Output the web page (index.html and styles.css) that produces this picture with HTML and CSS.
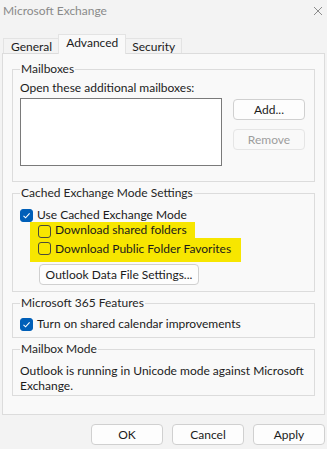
FILE: index.html
```html
<!DOCTYPE html>
<html lang="en">
<head>
  <meta charset="UTF-8" />
  <title>Microsoft Exchange</title>
  <link rel="stylesheet" href="styles.css">
</head>
<body>
  <div class="window">
    <div class="titlebar">
      <span class="title">Microsoft Exchange</span>
      <svg class="close" width="10" height="10" viewBox="0 0 10 10">
        <path d="M1 1 L9 9 M9 1 L1 9" stroke="#8c8c8c" stroke-width="1" fill="none"/>
      </svg>
    </div>

    <div class="tabs">
      <div class="tab">General</div>
      <div class="tab active">Advanced</div>
      <div class="tab">Security</div>
    </div>

    <div class="panel">
      <fieldset class="group mailboxes">
        <legend>Mailboxes</legend>
        <div class="label">Open these additional mailboxes:</div>
        <div class="mailbox-row">
          <div class="listbox"></div>
          <div class="side-buttons">
            <button class="btn">Add...</button>
            <button class="btn" disabled>Remove</button>
          </div>
        </div>
      </fieldset>

      <fieldset class="group cached">
        <legend>Cached Exchange Mode Settings</legend>
        <label class="option use-cached">
          <span class="check checked">
            <svg width="9" height="9" viewBox="0 0 9 9"><path d="M1.5 4.8 L3.6 6.8 L7.6 2.4" stroke="#fff" stroke-width="1.1" fill="none"/></svg>
          </span>
          Use Cached Exchange Mode
        </label>
        <div class="highlight">
          <label class="option marked first"><span class="check"></span>Download shared folders</label>
          <label class="option marked second"><span class="check"></span>Download Public Folder Favorites</label>
        </div>
        <button class="btn wide">Outlook Data File Settings...</button>
      </fieldset>

      <fieldset class="group features">
        <legend>Microsoft 365 Features</legend>
        <label class="option">
          <span class="check checked">
            <svg width="9" height="9" viewBox="0 0 9 9"><path d="M1.5 4.8 L3.6 6.8 L7.6 2.4" stroke="#fff" stroke-width="1.1" fill="none"/></svg>
          </span>
          Turn on shared calendar improvements
        </label>
      </fieldset>

      <fieldset class="group mode">
        <legend>Mailbox Mode</legend>
        <p class="info">Outlook is running in Unicode mode against Microsoft Exchange.</p>
      </fieldset>
    </div>

    <div class="footer">
      <button class="btn">OK</button>
      <button class="btn">Cancel</button>
      <button class="btn">Apply</button>
    </div>
  </div>
</body>
</html>
```

FILE: styles.css
```css
* {
  box-sizing: border-box;
}

body {
  margin: 0;
  background-color: #f3f3f3;
  font-family: 'Lato', sans-serif;
  font-size: 12px;
  color: #1b1b1b;
}

.window {
  width: 327px;
  height: 449px;
  overflow: hidden;
}

.titlebar {
  height: 34px;
  display: flex;
  justify-content: space-between;
  align-items: flex-start;
  padding: 3px 4px 0 3px;
  line-height: 16px;
}

.title {
  color: #8a8a8a;
}

.close {
  margin-top: 3px;
}

.tabs {
  display: flex;
  align-items: flex-end;
  height: 19px;
  padding-left: 3px;
  position: relative;
  z-index: 1;
}

.tab {
  height: 15px;
  padding: 0 6px;
  line-height: 15px;
  border: 1px solid #e3e3e3;
  border-bottom: none;
  background-color: #f3f3f3;
}

.tab:first-child {
  padding-left: 7px;
  border-right: none;
}

.tab:last-child {
  border-left: none;
}

.tab.active {
  height: 20px;
  margin-bottom: -1px;
  padding: 1px 7px 0;
  background-color: #f9f9f9;
  line-height: 14px;
}

.panel {
  margin: 0 2px;
  height: 362px;
  background-color: #f9f9f9;
  border: 1px solid #dcdcdc;
  padding: 8px 9px 0;
}

.group {
  margin: 0;
  border: 1px solid #dcdcdc;
  padding: 0 9px 0 7px;
  min-width: 0;
}

.group + .group {
  margin-top: 4px;
}

.group legend {
  padding: 0 1px;
  line-height: 14px;
  color: #262626;
}

.label {
  margin-top: 4px;
  line-height: 16px;
}

.mailbox-row {
  display: flex;
  gap: 11px;
  margin-top: 2px;
  padding-bottom: 15px;
}

.listbox {
  width: 202px;
  height: 68px;
  background-color: #fff;
  border: 1px solid #7a7a7a;
}

.side-buttons {
  display: flex;
  flex-direction: column;
  gap: 9px;
  padding-top: 1px;
}

.btn {
  width: 72px;
  height: 21px;
  padding: 0;
  font-family: inherit;
  font-size: 12px;
  color: #1b1b1b;
  background-color: #fdfdfd;
  border: 1px solid #d0d0d0;
  border-radius: 4px;
}

.btn:disabled {
  color: #9d9d9d;
  background-color: #f9f9f9;
  border-color: #e5e5e5;
}

.option {
  display: flex;
  align-items: center;
  gap: 4px;
  line-height: 16px;
}

.option.use-cached {
  margin-top: 7px;
}

.check {
  width: 13px;
  height: 13px;
  flex: 0 0 13px;
  border: 1px solid #4a4a3a;
  border-radius: 3px;
  display: flex;
  align-items: center;
  justify-content: center;
}

.check.checked {
  background-color: #005fb8;
  border-color: #005fb8;
}

.highlight {
  display: flex;
  flex-direction: column;
  align-items: flex-start;
  margin-left: 10px;
  margin-top: -1px;
}

.option.marked {
  background-color: #f7e600;
  padding-left: 8px;
}

.option.first {
  height: 16px;
  padding-right: 8px;
  align-items: flex-end;
}

.option.second {
  height: 24px;
  padding: 2px 10px 5px 8px;
}

.btn.wide {
  width: 160px;
  margin: 2px 0 6px 19px;
}

.features .option {
  margin-top: 6px;
  margin-bottom: 5px;
}

.info {
  margin: 7px 0 2px;
  line-height: 15px;
}

.footer {
  display: flex;
  justify-content: flex-end;
  gap: 9px;
  padding: 9px 2px 0;
}
```
